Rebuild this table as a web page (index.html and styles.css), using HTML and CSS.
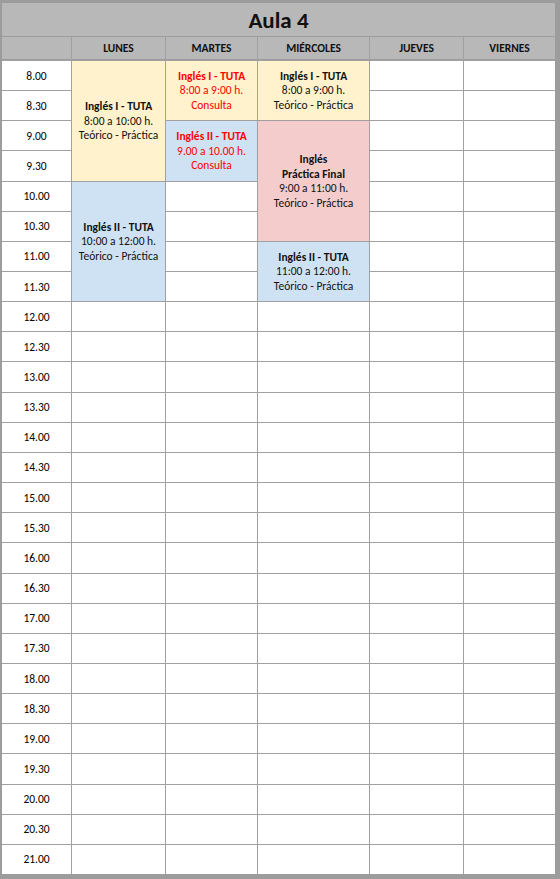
FILE: index.html
```html
<!DOCTYPE html>
<html lang="es">
<head>
<meta charset="utf-8">
<title>Aula 4</title>
<link rel="stylesheet" href="styles.css">
</head>
<body>
<div class="sheet">
  <div class="title">Aula 4</div>
  <div class="grid">
    <div class="head"></div>
    <div class="head">LUNES</div>
    <div class="head">MARTES</div>
    <div class="head">MIÉRCOLES</div>
    <div class="head">JUEVES</div>
    <div class="head">VIERNES</div>

    <div class="ev yellow lun-1"><b>Inglés I - TUTA</b><span>8:00 a 10:00 h.</span><span>Teórico - Práctica</span></div>
    <div class="ev yellow red mar-1"><b>Inglés I - TUTA</b><span>8:00 a 9:00 h.</span><span>Consulta</span></div>
    <div class="ev yellow mie-1"><b>Inglés I - TUTA</b><span>8:00 a 9:00 h.</span><span>Teórico - Práctica</span></div>
    <div class="ev blue red mar-2"><b>Inglés II - TUTA</b><span>9.00 a 10.00 h.</span><span>Consulta</span></div>
    <div class="ev pink mie-2"><b>Inglés</b><b>Práctica Final</b><span>9:00 a 11:00 h.</span><span>Teórico - Práctica</span></div>
    <div class="ev blue lun-2"><b>Inglés II - TUTA</b><span>10:00 a 12:00 h.</span><span>Teórico - Práctica</span></div>
    <div class="ev blue mie-3"><b>Inglés II - TUTA</b><span>11:00 a 12:00 h.</span><span>Teórico - Práctica</span></div>

    <div class="time">8.00</div><div class="cell"></div><div class="cell"></div>
    <div class="time">8.30</div><div class="cell"></div><div class="cell"></div>
    <div class="time">9.00</div><div class="cell"></div><div class="cell"></div>
    <div class="time">9.30</div><div class="cell"></div><div class="cell"></div>
    <div class="time">10.00</div><div class="cell"></div><div class="cell"></div><div class="cell"></div>
    <div class="time">10.30</div><div class="cell"></div><div class="cell"></div><div class="cell"></div>
    <div class="time">11.00</div><div class="cell"></div><div class="cell"></div><div class="cell"></div>
    <div class="time">11.30</div><div class="cell"></div><div class="cell"></div><div class="cell"></div>
    <div class="time">12.00</div><div class="cell"></div><div class="cell"></div><div class="cell"></div><div class="cell"></div><div class="cell"></div>
    <div class="time">12.30</div><div class="cell"></div><div class="cell"></div><div class="cell"></div><div class="cell"></div><div class="cell"></div>
    <div class="time">13.00</div><div class="cell"></div><div class="cell"></div><div class="cell"></div><div class="cell"></div><div class="cell"></div>
    <div class="time">13.30</div><div class="cell"></div><div class="cell"></div><div class="cell"></div><div class="cell"></div><div class="cell"></div>
    <div class="time">14.00</div><div class="cell"></div><div class="cell"></div><div class="cell"></div><div class="cell"></div><div class="cell"></div>
    <div class="time">14.30</div><div class="cell"></div><div class="cell"></div><div class="cell"></div><div class="cell"></div><div class="cell"></div>
    <div class="time">15.00</div><div class="cell"></div><div class="cell"></div><div class="cell"></div><div class="cell"></div><div class="cell"></div>
    <div class="time">15.30</div><div class="cell"></div><div class="cell"></div><div class="cell"></div><div class="cell"></div><div class="cell"></div>
    <div class="time">16.00</div><div class="cell"></div><div class="cell"></div><div class="cell"></div><div class="cell"></div><div class="cell"></div>
    <div class="time">16.30</div><div class="cell"></div><div class="cell"></div><div class="cell"></div><div class="cell"></div><div class="cell"></div>
    <div class="time">17.00</div><div class="cell"></div><div class="cell"></div><div class="cell"></div><div class="cell"></div><div class="cell"></div>
    <div class="time">17.30</div><div class="cell"></div><div class="cell"></div><div class="cell"></div><div class="cell"></div><div class="cell"></div>
    <div class="time">18.00</div><div class="cell"></div><div class="cell"></div><div class="cell"></div><div class="cell"></div><div class="cell"></div>
    <div class="time">18.30</div><div class="cell"></div><div class="cell"></div><div class="cell"></div><div class="cell"></div><div class="cell"></div>
    <div class="time">19.00</div><div class="cell"></div><div class="cell"></div><div class="cell"></div><div class="cell"></div><div class="cell"></div>
    <div class="time">19.30</div><div class="cell"></div><div class="cell"></div><div class="cell"></div><div class="cell"></div><div class="cell"></div>
    <div class="time">20.00</div><div class="cell"></div><div class="cell"></div><div class="cell"></div><div class="cell"></div><div class="cell"></div>
    <div class="time">20.30</div><div class="cell"></div><div class="cell"></div><div class="cell"></div><div class="cell"></div><div class="cell"></div>
    <div class="time">21.00</div><div class="cell"></div><div class="cell"></div><div class="cell"></div><div class="cell"></div><div class="cell"></div>
  </div>
</div>
</body>
</html>
```

FILE: styles.css
```css
html, body {
  margin: 0;
  padding: 0;
  background: #ffffff;
}

body {
  font-family: Carlito, Calibri, Lato, "Liberation Sans", sans-serif;
  color: #000000;
  font-size: 11.5px;
}

.sheet {
  width: 560px;
  height: 879px;
  box-sizing: border-box;
  border-style: solid;
  border-color: #9c9c9c;
  border-width: 3px 5px 5px 2px;
  display: flex;
  flex-direction: column;
}

.title {
  height: 33px;
  border-bottom: 1px solid #9c9c9c;
  background: #b8b8b8;
  display: flex;
  align-items: center;
  justify-content: center;
  font-weight: bold;
  font-size: 23px;
  color: #111;
}

.grid {
  display: grid;
  grid-template-columns: 69px 93px 91px 111px 93px 91px;
  grid-template-rows: 23px repeat(27, 1fr);
  gap: 1px;
  background: #a0a0a0;
  flex: 1;
}

.head {
  background: #b8b8b8;
  border-bottom: 1px solid #9c9c9c;
  display: flex;
  align-items: center;
  justify-content: center;
  font-weight: bold;
  font-size: 11.5px;
  color: #111;
}

.time {
  background: #ffffff;
  display: flex;
  align-items: center;
  justify-content: center;
}

.cell {
  background: #ffffff;
}

.ev {
  display: flex;
  flex-direction: column;
  align-items: center;
  justify-content: center;
  text-align: center;
  line-height: 14.5px;
  color: #111;
}

.ev b {
  font-weight: bold;
}

.yellow { background: #fff2cc; }
.blue { background: #cfe2f3; }
.pink { background: #f4cccc; }
.red { color: #ff0000; }

.lun-1 { grid-column: 2; grid-row: 2 / span 4; }
.lun-2 { grid-column: 2; grid-row: 6 / span 4; }
.mar-1 { grid-column: 3; grid-row: 2 / span 2; }
.mar-2 { grid-column: 3; grid-row: 4 / span 2; }
.mie-1 { grid-column: 4; grid-row: 2 / span 2; }
.mie-2 { grid-column: 4; grid-row: 4 / span 4; }
.mie-3 { grid-column: 4; grid-row: 8 / span 2; }
```
